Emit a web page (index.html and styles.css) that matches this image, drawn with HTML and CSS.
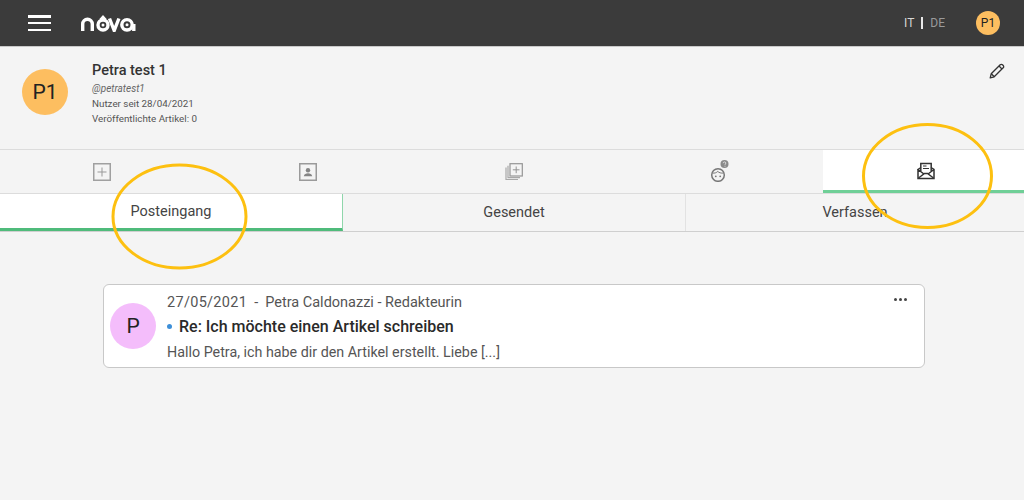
FILE: index.html
```html
<!DOCTYPE html>
<html lang="de">
<head>
<meta charset="utf-8">
<title>nova</title>
<link rel="stylesheet" href="styles.css">
</head>
<body>
<header class="topbar">
  <button class="burger" aria-label="Menü"><span></span><span></span><span></span></button>
  <svg class="logo" width="56" height="18" viewBox="0 0 56 18" role="img" aria-label="nova">
    <path d="M1.700 17V10a4.800 4.800 0 0 1 9.600 0v7" fill="none" stroke="#fff" stroke-width="3.400"/>
    <circle cx="22" cy="11" r="5" fill="none" stroke="#fff" stroke-width="3.400"/>
    <path d="M22 1l3.600 4h-7.200z" fill="#fff"/>
    <circle cx="22" cy="11" r="1.500" fill="#fff"/>
    <path d="M28.500 4.500l4.700 12 4.700-12" fill="none" stroke="#fff" stroke-width="3.400"/>
    <circle cx="46" cy="10.800" r="5.200" fill="none" stroke="#fff" stroke-width="3.400"/>
    <circle cx="46" cy="10.800" r="1.500" fill="#fff"/>
    <path d="M52.800 10v7" fill="none" stroke="#fff" stroke-width="3.400"/>
  </svg>
  <div class="lang"><span class="lang-on">IT</span><i class="lang-sep"></i><span class="lang-off">DE</span></div>
  <div class="avatar avatar-small">P1</div>
</header>

<section class="profile">
  <div class="avatar avatar-big">P1</div>
  <div class="profile-info">
    <h1 class="profile-name">Petra test 1</h1>
    <p class="profile-handle">@petratest1</p>
    <p class="profile-line">Nutzer seit 28/04/2021</p>
    <p class="profile-line">Veröffentlichte Artikel: 0</p>
  </div>
  <svg class="edit" width="16" height="16" viewBox="0 0 16 16" fill="none" stroke="#333" stroke-width="1.300" stroke-linejoin="round">
    <path d="M1.200 14.800l1-4L11.200 1.800a1.600 1.600 0 0 1 2.300 0l.7.7a1.600 1.600 0 0 1 0 2.300L5.200 13.800z"/>
    <path d="M2.300 10.700l3 3M10 3l3 3"/>
  </svg>
</section>

<nav class="icon-tabs">
  <div class="icon-tab icon-tab-add">
    <svg width="18" height="18" viewBox="0 0 18 18" fill="none" stroke="#a0a0a0"><rect x=".75" y=".75" width="16.500" height="16.500" stroke-width="1.500"/><path d="M9 4.500v9M4.500 9h9" stroke="#999"/></svg>
  </div>
  <div class="icon-tab">
    <svg width="18" height="18" viewBox="0 0 18 18"><rect x=".75" y=".75" width="16.500" height="16.500" fill="none" stroke="#9a9a9a" stroke-width="1.500"/><circle cx="9" cy="7.200" r="2.200" fill="#858585"/><path d="M4.800 13.200c.4-2.300 2.200-3 4.200-3s3.800.7 4.200 3z" fill="#858585"/></svg>
  </div>
  <div class="icon-tab icon-tab-stack">
    <svg width="18" height="18" viewBox="0 0 18 18" fill="none" stroke="#a8a8a8"><path d="M1 4.500V16.500H13" stroke-width="1.200"/><path d="M3 2.800V14.700H15" stroke-width="1.200"/><rect x="5" y=".7" width="12.300" height="12.300" fill="#f4f4f4" stroke="#959595" stroke-width="1.200"/><path d="M11.200 3.500v6.700M7.800 6.800h6.700" stroke="#959595"/></svg>
  </div>
  <div class="icon-tab icon-tab-kid">
    <svg class="kid" width="20" height="22" viewBox="0 0 20 22"><circle cx="9" cy="15" r="6.300" fill="none" stroke="#777" stroke-width="1.500"/><path d="M3.500 13c2.200.4 4-.3 5.300-1.600 1.100 1.300 3.400 2 5.700 1.600" fill="none" stroke="#777"/><circle cx="6.800" cy="16.300" r=".9" fill="#777"/><circle cx="11.200" cy="16.300" r=".9" fill="#777"/><circle cx="15.500" cy="4" r="4" fill="#8a8a8a"/><path d="M14.200 3.200a1.300 1.300 0 1 1 1.800 1.200v.9M16 6v.7" fill="none" stroke="#eee" stroke-width=".8"/></svg>
  </div>
  <div class="icon-tab icon-tab-active">
    <svg width="18" height="18" viewBox="0 0 18 18" fill="none" stroke="#333" stroke-width="1.500"><path d="M1 7.500V16.500H17V7.500L14 5.500M4 5.500L1 7.500l6 4.500M17 7.500l-6 4.500"/><path d="M3.800 9V1.500H14.200V9"/><path d="M1.500 16l6-4.500h3l6 4.500"/><path d="M6 4h3.500M6 6.500h6" stroke-width="1.200"/></svg>
  </div>
</nav>

<nav class="sub-tabs">
  <div class="sub-tab sub-tab-active">Posteingang</div>
  <div class="sub-tab">Gesendet</div>
  <div class="sub-tab">Verfassen</div>
</nav>

<main class="content">
  <article class="card">
    <div class="avatar avatar-card">P</div>
    <div class="card-body">
      <div class="card-meta"><span class="meta-date">27/05/2021</span><span class="meta-dash">-</span><span>Petra Caldonazzi - Redakteurin</span></div>
      <h2 class="card-title"><i class="unread"></i>Re: Ich möchte einen Artikel schreiben</h2>
      <p class="card-text">Hallo Petra, ich habe dir den Artikel erstellt. Liebe [...]</p>
    </div>
    <div class="card-more"><i></i><i></i><i></i></div>
  </article>
</main>

<svg class="marks" width="1024" height="500" viewBox="0 0 1024 500" fill="none" stroke="#fdc010" stroke-width="3" aria-hidden="true">
  <ellipse cx="179.500" cy="216.500" rx="66.500" ry="51.500"/>
  <ellipse cx="927.500" cy="176" rx="64" ry="51.500"/>
</svg>
</body>
</html>
```
FILE: styles.css
```css
* { box-sizing: border-box; }
html, body { margin: 0; height: 100%; }
body {
  position: relative;
  width: 1024px;
  height: 500px;
  overflow: hidden;
  background: #f4f4f4;
  color: #333;
  font-family: Roboto, "Liberation Sans", sans-serif;
}
h1, h2, p { margin: 0; font-weight: normal; }

.topbar {
  display: flex;
  align-items: center;
  height: 47px;
  padding: 0 24px 0 28px;
  background: #3b3b3b;
  border-bottom: 1px solid #c9c9c9;
}
.burger {
  display: flex;
  flex-direction: column;
  justify-content: space-between;
  width: 23px;
  height: 16px;
  padding: 0;
  border: 0;
  background: none;
}
.burger span { display: block; height: 2.500px; background: #fff; }
.logo { margin-left: 30px; }
.lang {
  display: flex;
  align-items: center;
  margin-left: auto;
  font-size: 12px;
}
.lang-on { color: #d8d8d8; }
.lang-off { color: #9a9a9a; }
.lang-sep { width: 2px; height: 12px; margin: 0 7px 0 7px; background: #e8e8e8; }

.avatar {
  display: flex;
  align-items: center;
  justify-content: center;
  flex: none;
  border-radius: 50%;
  color: #222;
}
.avatar-small {
  width: 24px;
  height: 24px;
  margin-left: 31px;
  background: #fdbe60;
  font-size: 12px;
}
.avatar-big {
  width: 46px;
  height: 46px;
  background: #fdbe60;
  font-size: 21px;
}
.avatar-card {
  width: 46px;
  height: 46px;
  background: #f4bdfb;
  font-size: 21px;
}

.profile {
  display: flex;
  align-items: flex-start;
  height: 103px;
  padding: 22px 19px 0 22px;
  border-bottom: 1px solid #dcdcdc;
}
.profile-info { margin-left: 24px; margin-top: -8px; }
.profile-name { font-size: 14.500px; font-weight: 500; line-height: 20px; color: #333; }
.profile-handle { font-size: 10px; font-style: italic; line-height: 15px; color: #666; }
.profile-line { font-size: 9.800px; line-height: 15px; color: #555; }
.edit { margin-left: auto; margin-top: -6px; }

.icon-tabs {
  display: grid;
  grid-template-columns: repeat(5, 205px);
  height: 44px;
  border-bottom: 1px solid #dcdcdc;
}
.icon-tab {
  display: flex;
  align-items: center;
  justify-content: center;
  padding-top: 1px;
}
.icon-tab-add { padding-right: 2px; }
.icon-tab-stack { padding-left: 3px; }
.icon-tab-kid { padding-left: 2px; }
.kid { margin-bottom: 2px; }
.icon-tab-active {
  margin-left: 3px;
  background: #fff;
  border-bottom: 3px solid #6fcf97;
  padding: 2px 0 0 3px;
}

.sub-tabs {
  display: grid;
  grid-template-columns: 343px 343px 338px;
  height: 38px;
  border-bottom: 1px solid #cfcfcf;
}
.sub-tab {
  display: flex;
  align-items: center;
  justify-content: center;
  border-right: 1px solid #e2e2e2;
  padding-bottom: 1px;
  font-size: 14.500px;
  color: #444;
}
.sub-tab:last-child { border-right: 0; }
.sub-tab-active {
  background: #fff;
  border-right-color: #8fd6ab;
  border-bottom: 3px solid #4fbb7b;
  padding-bottom: 0;
}

.content { padding: 52px 99px 0 103px; }
.card {
  display: flex;
  align-items: center;
  height: 84px;
  padding: 0 17px 0 6px;
  background: #fff;
  border: 1px solid #c8c8c8;
  border-radius: 6px;
}
.card-body { flex: 1; margin-left: 11px; margin-top: 3px; }
.card-meta { display: flex; font-size: 14.500px; line-height: 20px; color: #555; }
.meta-date { letter-spacing: .3px; }
.meta-dash { margin: 0 7px 0 7px; }
.card-title { display: flex; align-items: center; font-size: 16px; font-weight: 500; line-height: 28px; color: #2a2a2a; }
.unread { width: 5px; height: 5px; margin-right: 7px; border-radius: 50%; background: #3d8fd8; }
.card-text { font-size: 14.300px; line-height: 22px; color: #555; }
.card-more { display: flex; gap: 2px; align-self: flex-start; margin-top: 13px; }
.card-more i { width: 3px; height: 3px; border-radius: 50%; background: #444; }

.marks { position: absolute; left: 0; top: 0; pointer-events: none; }
```
